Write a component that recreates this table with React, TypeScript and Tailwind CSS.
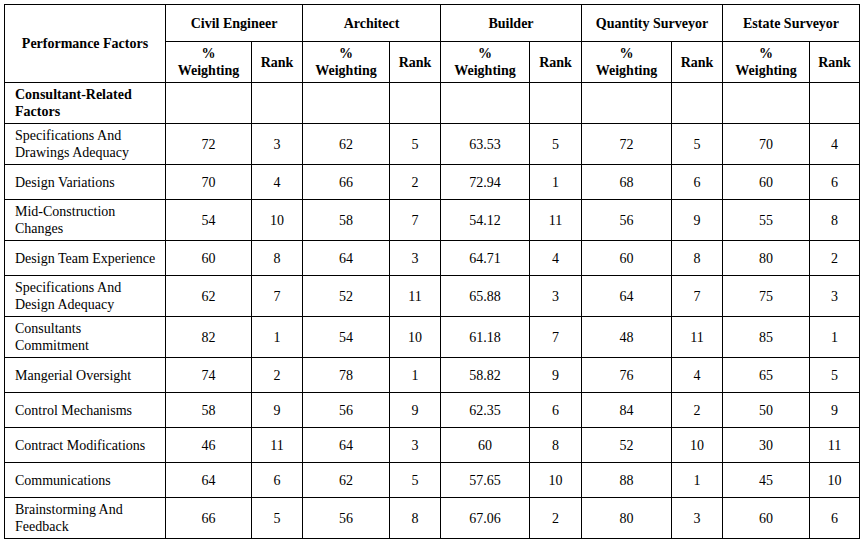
const groups = [
  "Civil Engineer",
  "Architect",
  "Builder",
  "Quantity Surveyor",
  "Estate Surveyor",
];

const widths = [161, 86, 51, 87, 51, 89, 52, 90, 51, 87, 50];

type Row = { name: string; two?: boolean; vals: (string | number)[] };

const rows: Row[] = [
  { name: "Specifications And Drawings Adequacy", two: true, vals: [72, 3, 62, 5, "63.53", 5, 72, 5, 70, 4] },
  { name: "Design Variations", vals: [70, 4, 66, 2, "72.94", 1, 68, 6, 60, 6] },
  { name: "Mid-Construction Changes", two: true, vals: [54, 10, 58, 7, "54.12", 11, 56, 9, 55, 8] },
  { name: "Design Team Experience", vals: [60, 8, 64, 3, "64.71", 4, 60, 8, 80, 2] },
  { name: "Specifications And Design Adequacy", two: true, vals: [62, 7, 52, 11, "65.88", 3, 64, 7, 75, 3] },
  { name: "Consultants Commitment", two: true, vals: [82, 1, 54, 10, "61.18", 7, 48, 11, 85, 1] },
  { name: "Mangerial Oversight", vals: [74, 2, 78, 1, "58.82", 9, 76, 4, 65, 5] },
  { name: "Control Mechanisms", vals: [58, 9, 56, 9, "62.35", 6, 84, 2, 50, 9] },
  { name: "Contract Modifications", vals: [46, 11, 64, 3, 60, 8, 52, 10, 30, 11] },
  { name: "Communications", vals: [64, 6, 62, 5, "57.65", 10, 88, 1, 45, 10] },
  { name: "Brainstorming And Feedback", two: true, vals: [66, 5, 56, 8, "67.06", 2, 80, 3, 60, 6] },
];

export default function App() {
  return (
    <div className="w-[863px] h-[545px] bg-white pl-1 pt-1 font-['Liberation_Serif',serif] text-[14px] leading-[17px] text-black">
      <table className="table-fixed border-collapse w-[856px]">
        <colgroup>
          {widths.map((w, i) => (
            <col key={i} style={{ width: w }} />
          ))}
        </colgroup>
        <thead>
          <tr className="h-[37px]">
            <th rowSpan={2} className="border border-black px-2 font-bold">
              Performance Factors
            </th>
            {groups.map((g) => (
              <th key={g} colSpan={2} className="border border-black px-1 font-bold">
                {g}
              </th>
            ))}
          </tr>
          <tr className="h-[41px]">
            {groups.map((g) => (
              <>
                <th key={g + "w"} className="border border-black px-1 py-[2px] font-bold">
                  %<br />
                  Weighting
                </th>
                <th key={g + "r"} className="border border-black px-1 font-bold">
                  Rank
                </th>
              </>
            ))}
          </tr>
        </thead>
        <tbody>
          <tr className="h-[40px]">
            <td className="border border-black pl-[10px] pr-2 py-[3px] font-bold">
              Consultant-Related Factors
            </td>
            {widths.slice(1).map((_, i) => (
              <td key={i} className="border border-black"></td>
            ))}
          </tr>
          {rows.map((r) => (
            <tr key={r.name} className={r.two ? "h-[41px]" : "h-[35px]"}>
              <td className="border border-black pl-[10px] pr-2 py-[3px] align-middle">
                {r.name}
              </td>
              {r.vals.map((v, i) => (
                <td key={i} className="border border-black text-center px-1 align-middle">
                  {v}
                </td>
              ))}
            </tr>
          ))}
        </tbody>
      </table>
    </div>
  );
}
